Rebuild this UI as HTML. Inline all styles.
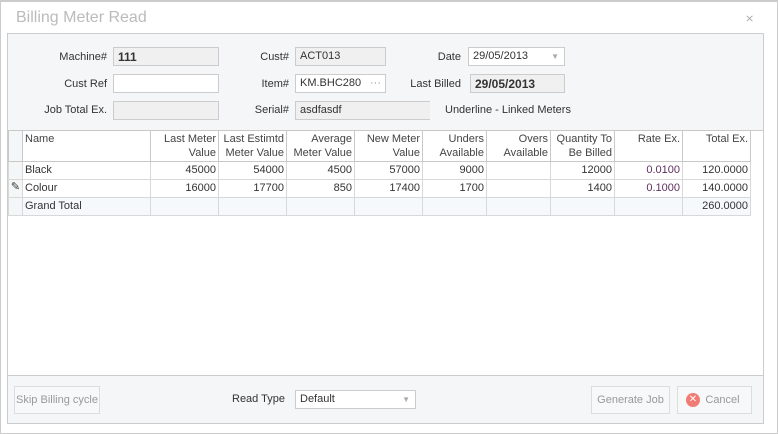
<!DOCTYPE html>
<html><head><style>
*{box-sizing:border-box;margin:0;padding:0}
body{width:778px;height:434px;background:#fff;font-family:"Liberation Sans",sans-serif;font-size:11px;color:#333;position:relative;overflow:hidden}
.a{position:absolute}
.lbl{position:absolute;text-align:right;color:#333}
.box{position:absolute;border:1px solid #ccc;background:#f0f0f0;height:19px;padding:2px 4px;font-size:11px}
.w{background:#fff}
table{position:absolute;left:8px;top:130px;border-collapse:collapse;table-layout:fixed}
td{border:1px solid #d8d8d8;height:18px;padding:1px 2px;text-align:right;vertical-align:top;font-size:11px;line-height:14px;overflow:hidden;white-space:nowrap}
th{border:1px solid #c8c8c8;height:31px;padding:1px 2px;text-align:right;vertical-align:top;font-weight:normal;font-size:11px;line-height:14px;background:#fff;color:#444}
.l{text-align:left}
.gt td{background:#f5f9fb}
.btn{position:absolute;border:1px solid #ddd;background:#f7f8fa;color:#999;text-align:center;font-size:11px;line-height:26px;height:28px}
</style></head><body>
<div class="a" style="left:0;top:0;width:778px;height:434px;border:1px solid #ccc;border-top:2px solid #ccc"></div>
<div class="a" style="left:16px;top:9px;font-size:16px;color:#bbb">Billing Meter Read</div>
<div class="a" style="left:745px;top:12px;color:#aaa;font-size:11px">⨯</div>
<div class="a" style="left:7px;top:33px;width:757px;height:391px;border:1px solid #ccc;background:#f5f6f8"></div>
<div class="lbl" style="left:20px;width:87px;top:51px">Machine#</div>
<div class="box" style="left:113px;top:47px;width:106px;font-weight:bold;font-size:12px">111</div>
<div class="lbl" style="left:20px;width:87px;top:78px">Cust Ref</div>
<div class="box w" style="left:113px;top:74px;width:106px"></div>
<div class="lbl" style="left:20px;width:87px;top:104px">Job Total Ex.</div>
<div class="box" style="left:113px;top:101px;width:106px"></div>
<div class="lbl" style="left:220px;width:69px;top:51px">Cust#</div>
<div class="box" style="left:295px;top:47px;width:91px">ACT013</div>
<div class="lbl" style="left:220px;width:69px;top:78px">Item#</div>
<div class="box w" style="left:295px;top:74px;width:91px">KM.BHC280<span style="position:absolute;right:4px;color:#999">···</span></div>
<div class="lbl" style="left:220px;width:69px;top:104px">Serial#</div>
<div class="box" style="left:295px;top:101px;width:135px;border-right:none">asdfasdf</div>
<div class="lbl" style="left:400px;width:61px;top:51px">Date</div>
<div class="box w" style="left:468px;top:47px;width:97px">29/05/2013<span style="position:absolute;right:5px;color:#aaa;font-size:8px;top:4px">▼</span></div>
<div class="lbl" style="left:400px;width:61px;top:78px">Last Billed</div>
<div class="box" style="left:470px;top:74px;width:95px;font-weight:bold;font-size:12px">29/05/2013</div>
<div class="a" style="left:445px;top:104px;color:#333">Underline - Linked Meters</div>
<div class="a" style="left:8px;top:130px;width:755px;height:246px;background:#fff;border-top:1px solid #ccc;border-bottom:1px solid #ccc"></div>
<table>
<colgroup><col style="width:14px"><col style="width:128px"><col style="width:68px"><col style="width:68px"><col style="width:68px"><col style="width:68px"><col style="width:64px"><col style="width:64px"><col style="width:64px"><col style="width:68px"><col style="width:68px"></colgroup>
<tr><th style="background:#f5f6f8"></th><th class="l">Name</th><th>Last Meter Value</th><th>Last Estimtd Meter Value</th><th>Average Meter Value</th><th>New Meter Value</th><th>Unders Available</th><th>Overs Available</th><th>Quantity To Be Billed</th><th>Rate Ex.</th><th>Total Ex.</th></tr>
<tr><td style="background:#f5f6f8"></td><td class="l">Black</td><td>45000</td><td>54000</td><td>4500</td><td>57000</td><td>9000</td><td></td><td>12000</td><td style="color:#603060">0.0100</td><td>120.0000</td></tr>
<tr><td style="background:#f5f6f8;padding:0;text-align:center">✎</td><td class="l">Colour</td><td>16000</td><td>17700</td><td>850</td><td>17400</td><td>1700</td><td></td><td>1400</td><td style="color:#603060">0.1000</td><td>140.0000</td></tr>
<tr class="gt"><td style="background:#f5f6f8"></td><td class="l">Grand Total</td><td></td><td></td><td></td><td></td><td></td><td></td><td></td><td></td><td>260.0000</td></tr>
</table>
<style>th{white-space:normal}</style>
<div class="btn" style="left:14px;top:386px;width:86px">Skip Billing cycle</div>
<div class="a" style="left:232px;top:393px">Read Type</div>
<div class="box w" style="left:295px;top:390px;width:121px">Default<span style="position:absolute;right:5px;color:#aaa;font-size:8px;top:4px">▼</span></div>
<div class="btn" style="left:591px;top:386px;width:79px">Generate Job</div>
<div class="btn" style="left:677px;top:386px;width:75px;padding-left:16px">Cancel<span style="position:absolute;left:8px;top:6px;width:14px;height:14px;border-radius:50%;background:#f07c74;color:#fff;font-size:10px;line-height:14px">✕</span></div>
</body></html>
